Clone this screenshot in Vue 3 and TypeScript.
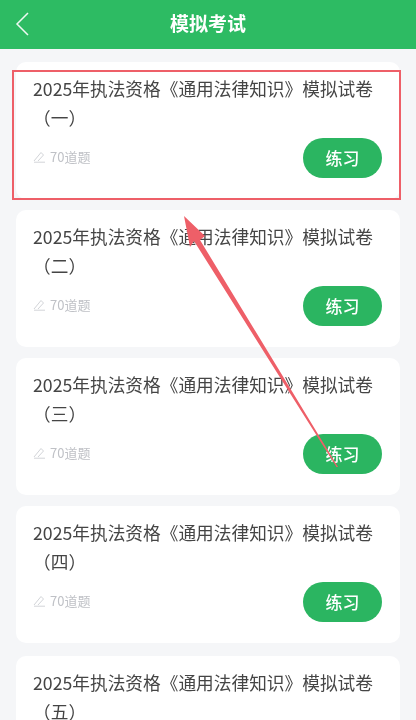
<script setup lang="ts">
const papers = ['（一）', '（二）', '（三）', '（四）', '（五）']
</script>

<template>
  <div class="page">
    <header class="bar">
      <svg class="back" width="16" height="26" viewBox="0 0 16 26" fill="none">
        <path d="M13 2 2 13l11 11" stroke="#eef9f2" stroke-width="1.5" />
      </svg>
      <h1>模拟考试</h1>
    </header>
    <main class="list">
      <article v-for="p in papers" :key="p" class="card">
        <p class="title">2025年执法资格《通用法律知识》模拟试卷{{ p }}</p>
        <div class="foot">
          <span class="count">
            <svg width="13" height="13" viewBox="0 0 13 13" fill="none">
              <path d="M1 11 8 2.5l2.5 2.5L5 11M1 12.2h11" stroke="#d2d4d8" stroke-width="1" />
            </svg>
            70道题
          </span>
          <button class="go">练习</button>
        </div>
      </article>
    </main>
    <div class="mark"></div>
    <svg class="arrow" width="416" height="720" viewBox="0 0 416 720">
      <polygon points="184,216 205,236 200,240 338,467 336.5,467 194,241 190,247" fill="#ee5f68" />
    </svg>
  </div>
</template>

<style scoped>
.page {
  position: relative;
  width: 416px;
  height: 720px;
  overflow: hidden;
  background: #f5f6f8;
  font-family: "Noto Sans CJK SC", "Noto Sans", sans-serif;
  filter: blur(0.5px);
}
.bar {
  position: relative;
  box-sizing: border-box;
  height: 49px;
  padding-bottom: 5px;
  background: #2dbb63;
  display: flex;
  align-items: center;
  justify-content: center;
}
.back {
  position: absolute;
  left: 15px;
  top: 11px;
}
h1 {
  margin: 0;
  color: #fff;
  font-size: 19px;
  font-weight: 700;
}
.list {
  display: flex;
  flex-direction: column;
  gap: 11px;
  padding: 13px 16px 0;
}
.card {
  flex: none;
  box-sizing: border-box;
  height: 137px;
  padding: 12px 17px 0;
  border-radius: 10px;
  background: #fff;
}
.card:last-child {
  margin-top: 2px;
}
.title {
  margin: 0;
  color: #454545;
  font-size: 17.7px;
  line-height: 29px;
}
.foot {
  display: flex;
  justify-content: space-between;
  margin-top: 6px;
  margin-right: 1px;
}
.count {
  display: flex;
  align-items: center;
  gap: 4px;
  height: 23px;
  padding-top: 7px;
  color: #bfc1c6;
  font-size: 13px;
}
.go {
  width: 79px;
  height: 40px;
  padding: 0 0 2px;
  border: 0;
  border-radius: 20px;
  background: #2bb561;
  color: #fff;
  font-family: inherit;
  font-size: 17px;
  font-weight: 500;
}
.mark {
  position: absolute;
  left: 12px;
  top: 70px;
  width: 389px;
  height: 130px;
  box-sizing: border-box;
  border: 2.5px solid #ee5f68;
}
.arrow {
  position: absolute;
  left: 0;
  top: 0;
}
</style>
